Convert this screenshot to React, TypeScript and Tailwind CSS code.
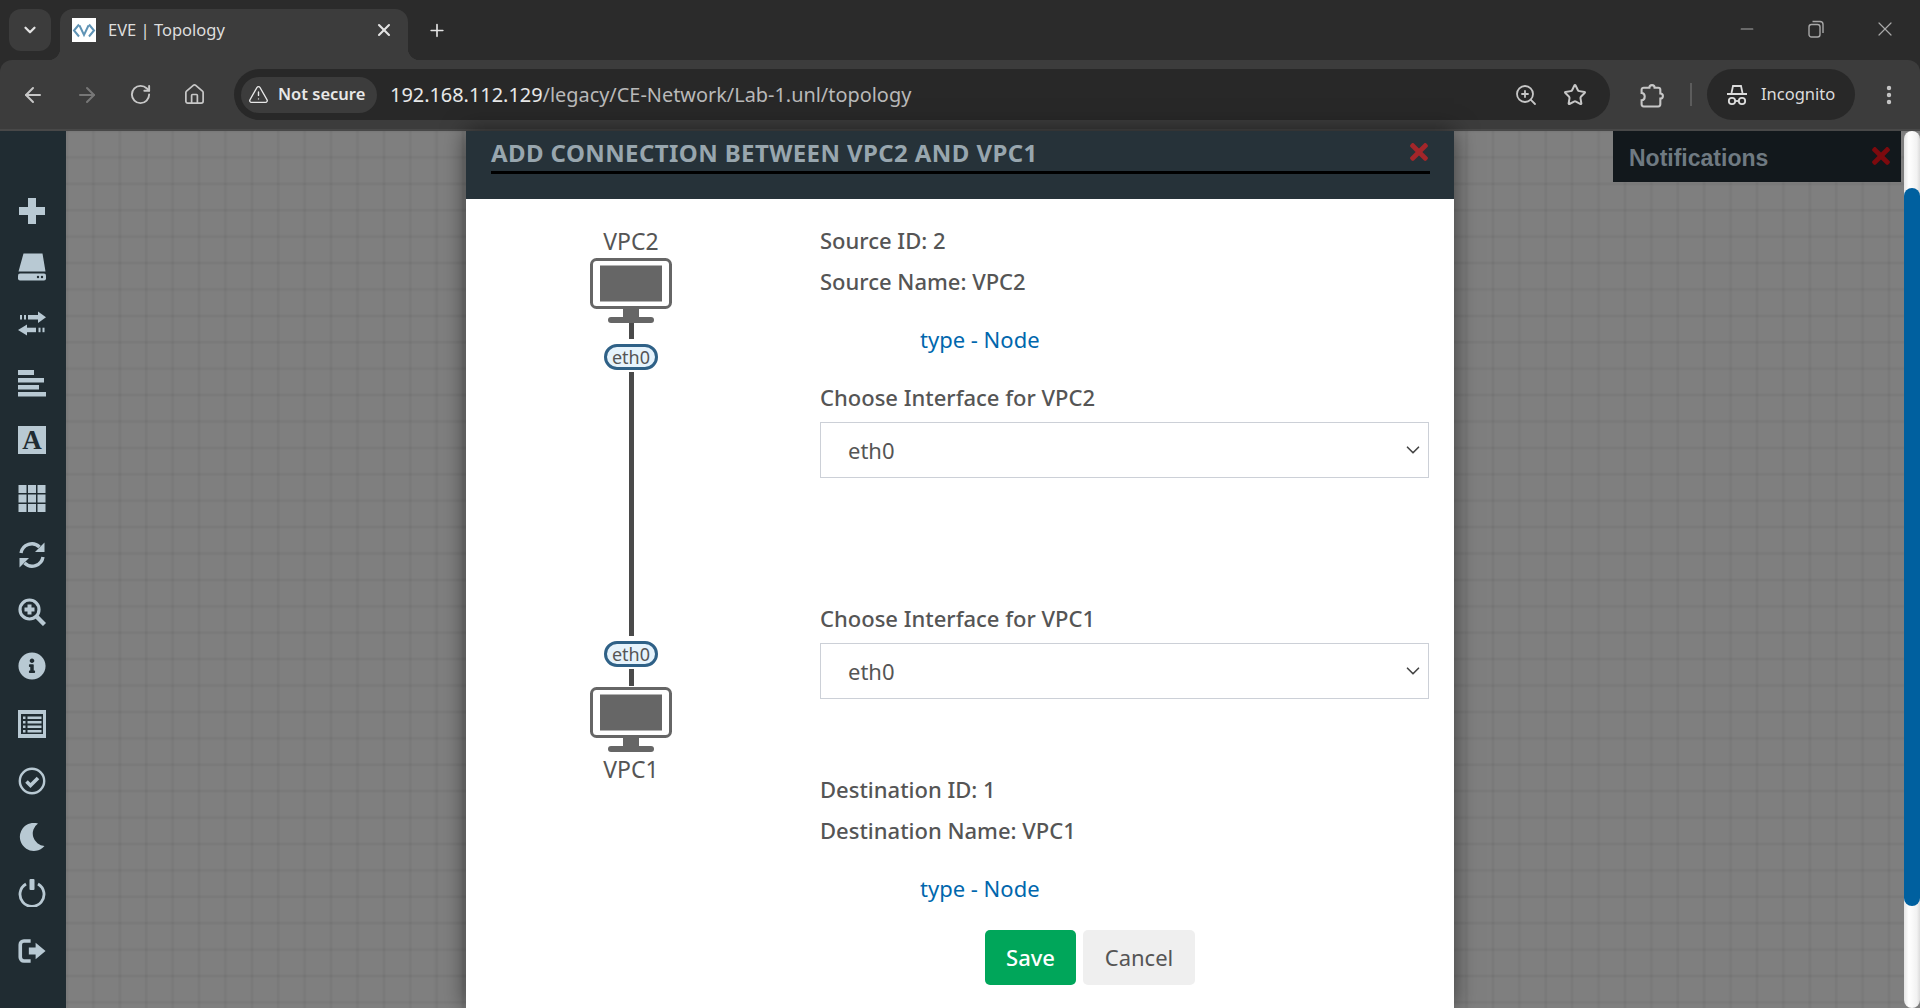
import { ArrowLeft, ArrowRight, ChevronDown, EllipsisVertical, Home, Minus, Plus, RotateCw, Star, TriangleAlert, X, ZoomIn } from 'lucide-react';
import { FaInfoCircle, FaTimes } from 'react-icons/fa';

const IconPlus = () => (
  <svg width="28" height="28" viewBox="0 0 28 28" fill="currentColor">
    <path d="M10 1h8v9h9v8h-9v9h-8v-9H1v-8h9z" />
  </svg>
);

const IconDrive = () => (
  <svg width="28" height="28" viewBox="0 0 28 28" fill="currentColor">
    <path d="M5.5 0.5H24.5L27.5 18.5H0.5Z" />
    <rect x="0" y="20.5" width="28" height="7" rx="2" />
    <circle cx="20" cy="24" r="1.2" fill="#202c32" />
    <circle cx="24" cy="24" r="1.2" fill="#202c32" />
  </svg>
);

const IconExchange = () => (
  <svg width="28" height="28" viewBox="0 0 28 28" fill="currentColor">
    <rect x="2" y="5" width="2" height="4.5" />
    <rect x="6" y="5" width="2" height="4.5" />
    <rect x="10" y="5" width="10" height="4.5" />
    <path d="M20 1.5 28 7.2 20 13z" />
    <path d="M9 14.5 0 20l9 5.5z" />
    <rect x="9" y="17.7" width="9" height="4.5" />
    <rect x="20.5" y="17.7" width="2" height="4.5" />
    <rect x="24.5" y="17.7" width="2" height="4.5" />
  </svg>
);

const IconAlign = () => (
  <svg width="28" height="28" viewBox="0 0 28 28" fill="currentColor">
    <rect x="0" y="1" width="16" height="5" />
    <rect x="0" y="9" width="26" height="4.5" />
    <rect x="0" y="16" width="21" height="4.5" />
    <rect x="0" y="23" width="28" height="4.5" />
  </svg>
);

const IconFontBox = () => (
  <div className="flex h-[28px] w-[28px] items-center justify-center bg-[#b8c9d3] font-['Liberation_Serif',serif] text-[27px] leading-none font-bold text-[#202c32]">
    A
  </div>
);

const IconGrid = () => (
  <svg width="28" height="28" viewBox="0 0 28 28" fill="currentColor">
    {[1, 10.5, 20].map((y) =>
      [0.5, 10, 19.5].map((x) => <rect key={`${x}-${y}`} x={x} y={y} width="8" height="8" />),
    )}
  </svg>
);

const IconRefresh = () => (
  <svg width="28" height="28" viewBox="0 0 28 28" fill="none" stroke="currentColor" strokeWidth="3.4">
    <path d="M3 12A11 11 0 0 1 21.5 6" />
    <path d="M26.5 1.5v9.5H17z" fill="currentColor" stroke="none" />
    <path d="M25 16A11 11 0 0 1 6.5 22" />
    <path d="M1.5 26.5V17H11z" fill="currentColor" stroke="none" />
  </svg>
);

const IconSearch = () => (
  <svg width="28" height="28" viewBox="0 0 28 28" fill="none" stroke="currentColor">
    <circle cx="11.5" cy="11.5" r="9.5" strokeWidth="3.2" />
    <path d="M19 19l7.5 7.5" strokeWidth="4.4" />
    <path d="M9.5 6.5h4v3h3v4h-3v3h-4v-3h-3v-4h3z" fill="currentColor" stroke="none" />
  </svg>
);

const IconList = () => (
  <svg width="28" height="28" viewBox="0 0 28 28" fill="currentColor">
    <path fillRule="evenodd" d="M0 0h28v28H0zM3 4v20h22V4z" />
    <rect x="5" y="6.5" width="2.5" height="2.5" />
    <rect x="9.5" y="6.5" width="14" height="2.5" />
    <rect x="5" y="11" width="2.5" height="2.5" />
    <rect x="9.5" y="11" width="14" height="2.5" />
    <rect x="5" y="15.5" width="2.5" height="2.5" />
    <rect x="9.5" y="15.5" width="14" height="2.5" />
    <rect x="5" y="20" width="2.5" height="2.5" />
    <rect x="9.5" y="20" width="14" height="2.5" />
  </svg>
);

const IconCheck = () => (
  <svg width="28" height="28" viewBox="0 0 28 28" fill="none" stroke="currentColor">
    <circle cx="14" cy="14" r="12.2" strokeWidth="2.4" />
    <path d="M8.5 14.5l4 4 7.5-7.5" strokeWidth="3.6" />
  </svg>
);

const IconMoon = () => (
  <svg width="28" height="28" viewBox="0 0 28 28" fill="currentColor">
    <path d="M20 0.5A14 14 0 1 0 26.5 23A12.4 12.4 0 0 1 20 0.5z" />
  </svg>
);

const IconPower = () => (
  <svg width="28" height="28" viewBox="0 0 28 28" fill="none" stroke="currentColor">
    <path d="M8 5A12 12 0 1 0 20 5" strokeWidth="2.8" />
    <rect x="11.5" y="0" width="5" height="11" rx="1" fill="currentColor" stroke="none" />
  </svg>
);

const IconSignOut = () => (
  <svg width="31" height="28" viewBox="0 0 31 28" fill="none" stroke="currentColor">
    <path d="M14 3H6.5a4 4 0 0 0-4 4v14a4 4 0 0 0 4 4H14" strokeWidth="4" />
    <path d="M19.5 5 30.5 14 19.5 23v-5H12v-8h7.5z" fill="currentColor" stroke="none" />
  </svg>
);

const SIDEBAR_ICONS = [
  { node: <IconPlus />, top: 'mt-[66px]' },
  { node: <IconDrive />, top: 'mt-[28px]' },
  { node: <IconExchange />, top: 'mt-[29px]' },
  { node: <IconAlign />, top: 'mt-[31px]' },
  { node: <IconFontBox />, top: 'mt-[29px]' },
  { node: <IconGrid />, top: 'mt-[30px]' },
  { node: <IconRefresh />, top: 'mt-[29px]' },
  { node: <IconSearch />, top: 'mt-[29px]' },
  { node: <FaInfoCircle size={28} />, top: 'mt-[26px]' },
  { node: <IconList />, top: 'mt-[30px]' },
  { node: <IconCheck />, top: 'mt-[29px]' },
  { node: <IconMoon />, top: 'mt-[28px]' },
  { node: <IconPower />, top: 'mt-[28px]' },
  { node: <IconSignOut />, top: 'mt-[30px]' },
];

const Monitor = () => (
  <svg width="82" height="65" viewBox="0 0 82 65" className="block shrink-0">
    <rect x="1.5" y="1.5" width="79" height="48" rx="5" fill="#fff" stroke="#666" strokeWidth="3" />
    <rect x="10" y="7.5" width="62" height="36" fill="#666" />
    <rect x="33" y="50" width="16" height="9" fill="#666" />
    <rect x="18" y="59" width="46" height="6" rx="3" fill="#666" />
  </svg>
);

const PortLabel = () => (
  <div className="flex h-[26px] w-[54px] shrink-0 items-center justify-center rounded-full border-[3px] border-[#2f6187] bg-[#e6f3fc] text-[18px] leading-none text-[#555]">
    eth0
  </div>
);

const InterfaceSelect = ({ label, gap }: { label: string; gap: string }) => (
  <div>
    <p className="text-[22px] leading-[28px] font-medium text-[#555]">{label}</p>
    <div className={`flex h-[56px] w-[609px] items-center justify-between border border-[#ccd0d7] pr-[4px] pl-[27px] text-[22px] text-[#555] ${gap}`}>
      <span>eth0</span>
      <ChevronDown size={22} strokeWidth={1.8} className="text-[#444]" />
    </div>
  </div>
);

const Topology = () => (
  <div className="flex w-[330px] shrink-0 flex-col items-center text-[23px] text-[#555]">
    <span className="h-[28px] leading-[28px]">VPC2</span>
    <div className="mt-[3px]">
      <Monitor />
    </div>
    <div className="h-[16px] w-[5px] bg-[#4a4a4a]" />
    <div className="mt-[5px]">
      <PortLabel />
    </div>
    <div className="mt-[2px] h-[264px] w-[5px] bg-[#4a4a4a]" />
    <div className="mt-[5px]">
      <PortLabel />
    </div>
    <div className="mt-[2px] h-[17px] w-[5px] bg-[#4a4a4a]" />
    <div className="mt-[1px]">
      <Monitor />
    </div>
    <span className="mt-[3px] h-[28px] leading-[28px]">VPC1</span>
  </div>
);

const EndpointInfo = ({ idLabel, nameLabel }: { idLabel: string; nameLabel: string }) => (
  <div className="text-[22px] leading-[28px] font-medium text-[#555]">
    <p>{idLabel}</p>
    <p className="mt-[13px]">{nameLabel}</p>
    <p className="mt-[30px] pl-[100px] font-normal text-[#0067ad]">type - Node</p>
  </div>
);

const ConnectionModal = () => (
  <div className="absolute top-0 left-[400px] flex h-[877px] w-[988px] flex-col bg-white shadow-[0_0_22px_rgba(0,0,0,0.55)]">
    <div className="h-[68px] shrink-0 bg-[#263239] pr-[24px] pl-[25px]">
      <div className="flex h-[43px] items-center justify-between border-b-[3px] border-black pt-[3px]">
        <h2 className="text-[24px] leading-[32px] font-bold tracking-[0.4px] text-[#98a6ae]">ADD CONNECTION BETWEEN VPC2 AND VPC1</h2>
        <FaTimes size={26} className="mr-[-2px] mb-[2px] text-[#a3262a]" />
      </div>
    </div>
    <div className="flex flex-1 pt-[28px]">
      <Topology />
      <div className="ml-[24px] flex-1 -translate-y-0 mt-[-1px]">
        <EndpointInfo idLabel="Source ID: 2" nameLabel="Source Name: VPC2" />
        <div className="mt-[30px]">
          <InterfaceSelect label="Choose Interface for VPC2" gap="mt-[11px]" />
        </div>
        <div className="mt-[126px]">
          <InterfaceSelect label="Choose Interface for VPC1" gap="mt-[11px]" />
        </div>
        <div className="mt-[76px]">
          <EndpointInfo idLabel="Destination ID: 1" nameLabel="Destination Name: VPC1" />
        </div>
        <div className="mt-[28px] flex gap-[7px] pl-[165px] text-[22px]">
          <button className="h-[55px] w-[91px] rounded-[5px] bg-[#00a65a] font-medium text-white">Save</button>
          <button className="h-[55px] w-[112px] rounded-[5px] bg-[#efefef] text-[#555]">Cancel</button>
        </div>
      </div>
    </div>
  </div>
);

const TabStrip = () => (
  <div className="flex h-[60px] items-end bg-[#2b2b2b] text-[#e3e3e3]">
    <div className="mb-[9px] ml-[9px] flex h-[42px] w-[42px] items-center justify-center rounded-[12px] bg-[#3c3c3c]">
      <ChevronDown size={18} strokeWidth={3} />
    </div>
    <div className="relative ml-[9px] flex h-[51px] w-[348px] items-center rounded-t-[13px] bg-[#3c3c3c] pr-[14px] pb-[9px] pl-[12px] before:absolute before:bottom-0 before:left-[-12px] before:h-[12px] before:w-[12px] before:bg-[radial-gradient(circle_at_0_0,transparent_12px,#3c3c3c_12.5px)] after:absolute after:right-[-12px] after:bottom-0 after:h-[12px] after:w-[12px] after:bg-[radial-gradient(circle_at_100%_0,transparent_12px,#3c3c3c_12.5px)]">
      <div className="flex h-[24px] w-[24px] items-center justify-center bg-white">
        <svg width="24" height="15" viewBox="0 0 24 15" fill="none" stroke="#5f93b5" strokeWidth="2">
          <path d="M7 1.5 2 7.5l5 6M17 1.5l5 6-5 6M7.5 2.5 12 12l4.5-9.5" />
        </svg>
      </div>
      <span className="ml-[12px] flex-1 text-[16.5px] text-[#dedede]">EVE | Topology</span>
      <X size={20} strokeWidth={2.5} />
    </div>
    <div className="mb-[19px] ml-[19px] flex w-[20px] justify-center">
      <Plus size={21} strokeWidth={2} />
    </div>
    <div className="mb-[19px] ml-auto flex items-center gap-[45px] pr-[23px] text-[#a8a8a8]">
      <div className="flex w-[24px] justify-center">
        <Minus size={20} strokeWidth={1.3} />
      </div>
      <div className="flex w-[24px] justify-center">
        <svg width="16" height="18" viewBox="0 0 16 18" fill="none" stroke="currentColor" strokeWidth="1.4">
          <rect x="1" y="4.5" width="11" height="12.5" rx="2.5" />
          <path d="M4.5 1.5H12a3 3 0 0 1 3 3V13" />
        </svg>
      </div>
      <div className="flex w-[24px] justify-center">
        <X size={24} strokeWidth={1.2} />
      </div>
    </div>
  </div>
);

const Toolbar = () => (
  <div className="flex h-[71px] items-center rounded-t-[12px] border-b-2 border-[#484848] bg-[#3c3c3c] pl-[21px] text-[#c7c7c7]">
    <ArrowLeft size={24} strokeWidth={2} />
    <ArrowRight size={24} strokeWidth={2} className="ml-[30px] text-[#777]" />
    <RotateCw size={23} strokeWidth={2} className="ml-[30px]" />
    <Home size={23} strokeWidth={1.8} className="ml-[31px]" />
    <div className="ml-[28px] flex h-[51px] w-[1376px] items-center rounded-full bg-[#282828] pr-[23px] pl-[7px]">
      <div className="flex h-[36px] w-[136px] items-center gap-[9px] rounded-full bg-[#3c3c3c] pl-[7px] text-[16.5px] font-semibold text-[#e8e8e8]">
        <TriangleAlert size={21} strokeWidth={1.6} />
        <span>Not secure</span>
      </div>
      <span className="ml-[13px] flex-1 text-[19.9px] text-[#e8e8e8]">
        192.168.112.129<span className="text-[#b9b9b9]">/legacy/CE-Network/Lab-1.unl/topology</span>
      </span>
      <ZoomIn size={24} strokeWidth={1.8} className="ml-[1px]" />
      <Star size={24} strokeWidth={2} className="ml-[25px]" />
    </div>
    <svg width="24" height="26" viewBox="0 0 22 25" fill="none" stroke="currentColor" strokeWidth="2" className="ml-[30px]">
      <path d="M3 5.5h5.5a2.5 2.5 0 0 1 5 0H17a2 2 0 0 1 2 2v3.5a2.5 2.5 0 0 1 0 5v5.5a2 2 0 0 1-2 2H3a2 2 0 0 1-2-2v-4c2.5 0 3-2 3-3.5s-.5-3.5-3-3.5V7.5a2 2 0 0 1 2-2z" />
    </svg>
    <div className="ml-[26px] h-[23px] w-[2px] bg-[#5c5c5c]" />
    <div className="ml-[15px] flex h-[51px] w-[148px] items-center gap-[12px] rounded-full bg-[#282828] pl-[18px] text-[16.5px] text-[#dcdcdc]">
      <svg width="24" height="22" viewBox="0 0 24 22" fill="none" stroke="currentColor" strokeWidth="1.8">
        <path d="M6.5 9 8 2h8l1.5 7M2 10h20" />
        <circle cx="7" cy="17" r="3.2" />
        <circle cx="17" cy="17" r="3.2" />
        <path d="M10.2 17h3.6" />
      </svg>
      <span>Incognito</span>
    </div>
    <EllipsisVertical size={24} strokeWidth={2.4} className="ml-[22px]" />
  </div>
);

export default function App() {
  return (
    <div className="flex h-[1008px] w-[1920px] flex-col overflow-hidden font-['Noto_Sans',sans-serif]">
      <div className="bg-[#2b2b2b]">
        <TabStrip />
        <Toolbar />
      </div>
      <div className="flex min-h-0 flex-1">
        <div className="flex w-[66px] shrink-0 flex-col items-center bg-[#202c32] pr-[2px] text-[#b8c9d3]">
          {SIDEBAR_ICONS.map(({ node, top }, i) => (
            <div key={i} className={`flex h-[28px] w-[28px] items-center justify-center ${top}`}>
              {node}
            </div>
          ))}
        </div>
        <div className="relative flex-1 bg-[#7f7f7f] bg-[linear-gradient(rgba(0,0,0,0.06),transparent_2px,transparent_calc(100%-2px),rgba(0,0,0,0.06)),linear-gradient(90deg,rgba(0,0,0,0.06),transparent_2px,transparent_calc(100%-2px),rgba(0,0,0,0.06))] bg-[size:26.42px_26.42px] bg-[position:1px_0]">
          <ConnectionModal />
          <div className="absolute top-0 right-[19px] flex h-[51px] w-[288px] justify-between bg-[#12181c] pr-[7px] pl-[16px] font-['Liberation_Sans',sans-serif] text-[23px] font-bold text-[#6f7a82]">
            <span className="pt-[11px] leading-[32px]">Notifications</span>
            <FaTimes size={26} className="mt-[12px] text-[#7d0a0e]" />
          </div>
          <div className="absolute top-0 right-0 flex h-full w-[16px] flex-col rounded-full bg-[linear-gradient(90deg,#e6e6e6,#ffffff_30%,#f2f2f2_80%,#dcdcdc)]">
            <div className="mt-[57px] h-[718px] w-[16px] rounded-full bg-[#00609f]" />
          </div>
        </div>
      </div>
    </div>
  );
}
